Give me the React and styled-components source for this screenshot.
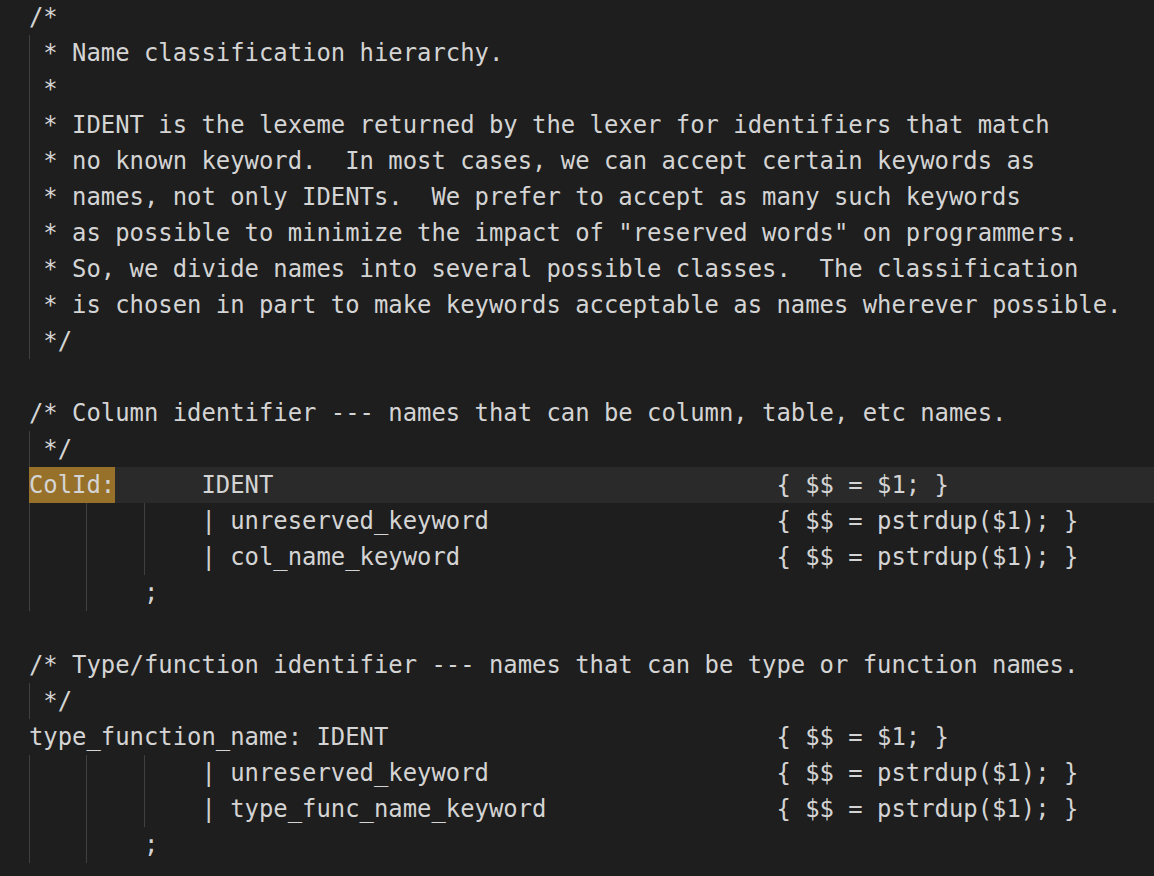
import React from "react";
import styled, { createGlobalStyle } from "styled-components";

const GlobalStyle = createGlobalStyle`
	html, body {
		margin: 0;
		padding: 0;
		background: #1e1e1e;
	}
`;

const lines = [
	{ text: "/*" },
	{ guides: [1], text: "* Name classification hierarchy." },
	{ guides: [1], text: "*" },
	{ guides: [1], text: "* IDENT is the lexeme returned by the lexer for identifiers that match" },
	{ guides: [1], text: "* no known keyword.  In most cases, we can accept certain keywords as" },
	{ guides: [1], text: "* names, not only IDENTs.  We prefer to accept as many such keywords" },
	{ guides: [1], text: "* as possible to minimize the impact of \"reserved words\" on programmers." },
	{ guides: [1], text: "* So, we divide names into several possible classes.  The classification" },
	{ guides: [1], text: "* is chosen in part to make keywords acceptable as names wherever possible." },
	{ guides: [1], text: "*/" },
	{ text: "" },
	{ text: "/* Column identifier --- names that can be column, table, etc names." },
	{ guides: [1], text: "*/" },
	{ mark: "ColId:", active: true, text: "      IDENT" + " ".repeat(35) + "{ $$ = $1; }" },
	{ guides: [4, 4, 4], text: "| unreserved_keyword" + " ".repeat(20) + "{ $$ = pstrdup($1); }" },
	{ guides: [4, 4, 4], text: "| col_name_keyword" + " ".repeat(22) + "{ $$ = pstrdup($1); }" },
	{ guides: [4, 4], text: ";" },
	{ text: "" },
	{ text: "/* Type/function identifier --- names that can be type or function names." },
	{ guides: [1], text: "*/" },
	{ text: "type_function_name: IDENT" + " ".repeat(27) + "{ $$ = $1; }" },
	{ guides: [4, 4, 4], text: "| unreserved_keyword" + " ".repeat(20) + "{ $$ = pstrdup($1); }" },
	{ guides: [4, 4, 4], text: "| type_func_name_keyword" + " ".repeat(16) + "{ $$ = pstrdup($1); }" },
	{ guides: [4, 4], text: ";" },
];

const Editor = () => {
	return (
		<Wrapper>
			<GlobalStyle />
			<div className="code">
				{lines.map((line, i) => (
					<Line key={i} $active={line.active}>
						{(line.guides || []).map((w, j) => (
							<Guide key={j} $w={w} />
						))}
						{line.mark && <Mark>{line.mark}</Mark>}
						{line.text}
					</Line>
				))}
			</div>
		</Wrapper>
	);
};

const Wrapper = styled.main`
	width: 100vw;
	height: 100vh;
	overflow: hidden;
	background: #1e1e1e;
	color: #d4d4d4;
	font-family: "DejaVu Sans Mono", "Liberation Mono", monospace;
	font-size: 23.88px;
	.code {
		margin-top: -1px;
		padding-left: 29px;
	}
`;

const Line = styled.div`
	height: 36px;
	line-height: 36px;
	white-space: pre;
	background: ${(p) => (p.$active ? "#2a2a2a" : "transparent")};
`;

const Guide = styled.span`
	display: inline-block;
	vertical-align: top;
	width: ${(p) => p.$w}ch;
	height: 36px;
	box-shadow: inset 1px 0 0 #404040;
`;

const Mark = styled.span`
	display: inline-block;
	vertical-align: top;
	height: 36px;
	background: #97702a;
`;

export default Editor;
